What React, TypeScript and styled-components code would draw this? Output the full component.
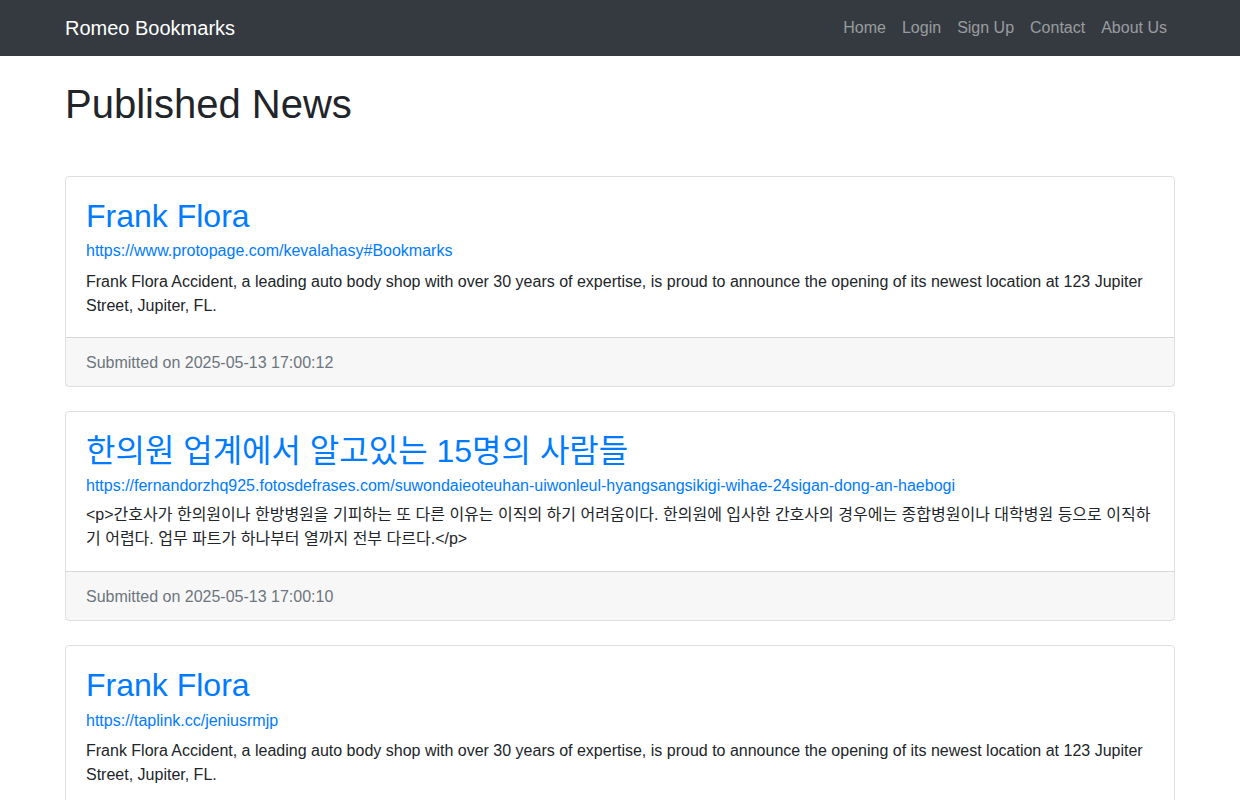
import React from "react";
import styled, { createGlobalStyle } from "styled-components";

const Global = createGlobalStyle`
  *, *::before, *::after { box-sizing: border-box; }
  html, body { margin: 0; padding: 0; }
  body {
    font-family: "Liberation Sans", "Noto Sans CJK KR", sans-serif;
    font-size: 16px;
    line-height: 1.5;
    color: #212529;
    background: #fff;
  }
`;

const Navbar = styled.nav`
  background: #343a40;
  padding: 8px 0;
`;
const NavInner = styled.div`
  width: 1110px;
  margin: 0 auto;
  display: flex;
  align-items: center;
  justify-content: space-between;
`;
const Brand = styled.a`
  color: #fff;
  font-size: 20px;
  line-height: 30px;
  padding: 5px 0;
  text-decoration: none;
`;
const NavList = styled.div`
  display: flex;
`;
const NavLink = styled.a`
  color: rgba(255, 255, 255, 0.5);
  padding: 8px;
  text-decoration: none;
`;
const Container = styled.main`
  width: 1140px;
  margin: 0 auto;
  padding: 0 15px;
`;
const Heading = styled.h1`
  font-size: 40px;
  font-weight: 500;
  line-height: 1.2;
  margin: 24px 0 48px;
`;
const Card = styled.article`
  border: 1px solid rgba(0, 0, 0, 0.125);
  border-radius: 4px;
  margin-bottom: 24px;
`;
const CardBody = styled.div<{ $korean: boolean }>`
  padding: 20px 20px ${(p) => (p.$korean ? "20px" : "18.8px")};
`;
const Title = styled.h2`
  font-size: 32px;
  font-weight: 400;
  line-height: 1.2;
  margin: 0 0 4px;
`;
const TitleLink = styled.a`
  color: #007bff;
  text-decoration: none;
`;
const UrlLink = styled.a<{ $korean: boolean }>`
  display: block;
  color: #007bff;
  text-decoration: none;
  margin-bottom: ${(p) => (p.$korean ? "5.2px" : "6.4px")};
`;
const Text = styled.p`
  margin: 0;
`;
const CardFooter = styled.div`
  padding: 13px 20px 11px;
  background: rgba(0, 0, 0, 0.03);
  border-top: 1px solid rgba(0, 0, 0, 0.125);
  color: #6c757d;
`;

const en =
  "Frank Flora Accident, a leading auto body shop with over 30 years of expertise, is proud to announce the opening of its newest location at 123 Jupiter Street, Jupiter, FL.";

const items = [
  { title: "Frank Flora", url: "https://www.protopage.com/kevalahasy#Bookmarks", text: en, date: "2025-05-13 17:00:12", korean: false },
  {
    title: "한의원 업계에서 알고있는 15명의 사람들",
    url: "https://fernandorzhq925.fotosdefrases.com/suwondaieoteuhan-uiwonleul-hyangsangsikigi-wihae-24sigan-dong-an-haebogi",
    text: "<p>간호사가 한의원이나 한방병원을 기피하는 또 다른 이유는 이직의 하기 어려움이다. 한의원에 입사한 간호사의 경우에는 종합병원이나 대학병원 등으로 이직하기 어렵다. 업무 파트가 하나부터 열까지 전부 다르다.</p>",
    date: "2025-05-13 17:00:10",
    korean: true,
  },
  { title: "Frank Flora", url: "https://taplink.cc/jeniusrmjp", text: en, date: "2025-05-13 17:00:08", korean: false },
];

export default function App() {
  return (
    <>
      <Global />
      <Navbar>
        <NavInner>
          <Brand href="#">Romeo Bookmarks</Brand>
          <NavList>
            {["Home", "Login", "Sign Up", "Contact", "About Us"].map((l) => (
              <NavLink href="#" key={l}>{l}</NavLink>
            ))}
          </NavList>
        </NavInner>
      </Navbar>
      <Container>
        <Heading>Published News</Heading>
        {items.map((it, i) => (
          <Card key={i}>
            <CardBody $korean={it.korean}>
              <Title><TitleLink href="#">{it.title}</TitleLink></Title>
              <UrlLink href="#" $korean={it.korean}>{it.url}</UrlLink>
              <Text>{it.text}</Text>
            </CardBody>
            <CardFooter>Submitted on {it.date}</CardFooter>
          </Card>
        ))}
      </Container>
    </>
  );
}
